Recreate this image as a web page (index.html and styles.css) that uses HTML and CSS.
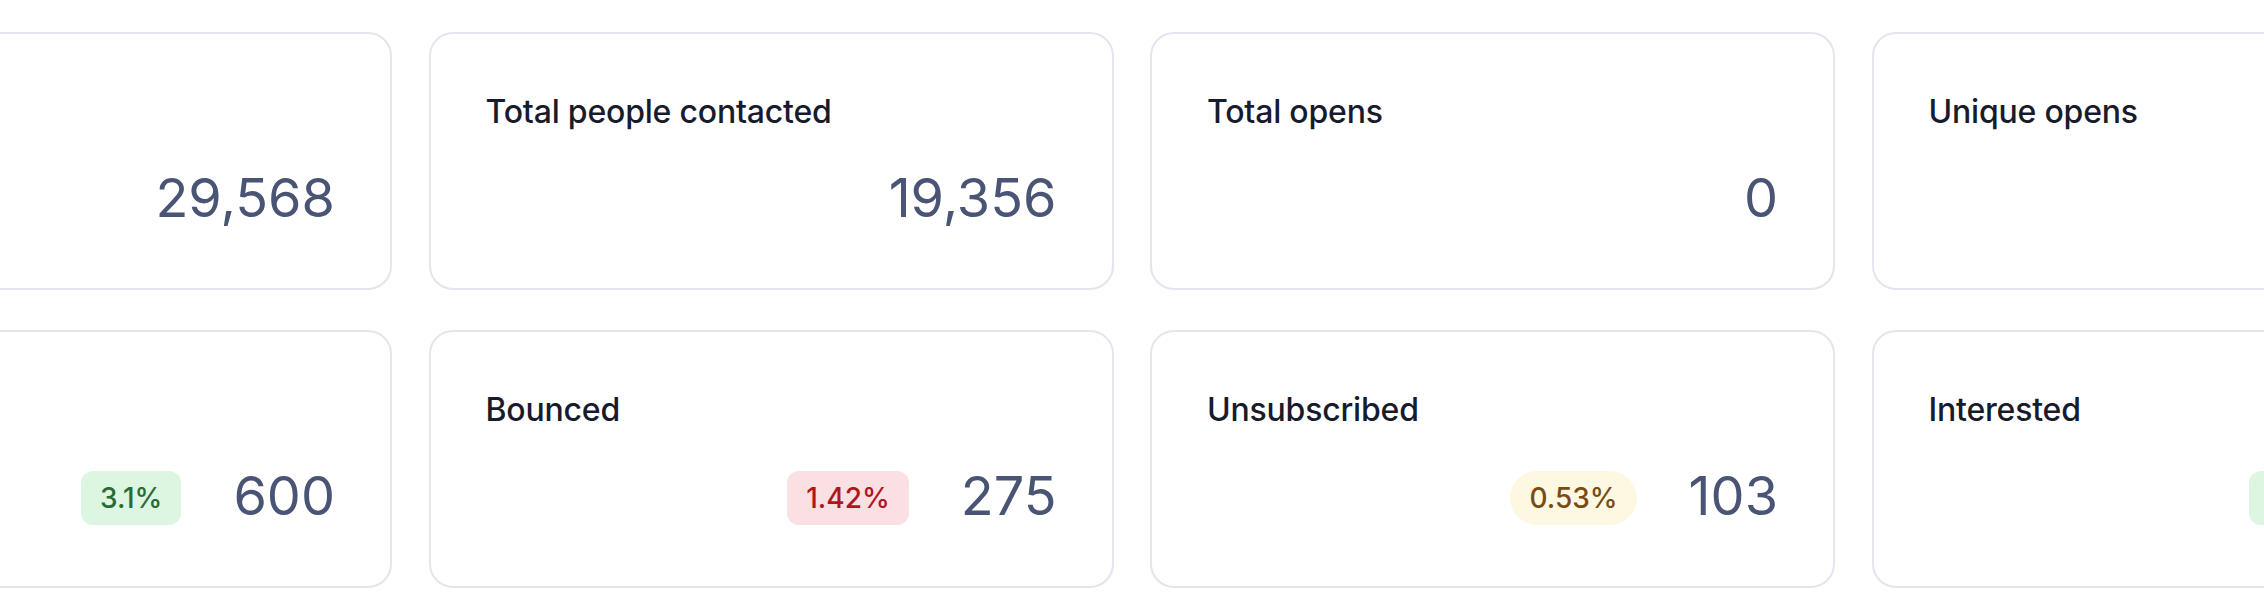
FILE: index.html
```html
<!DOCTYPE html>
<html lang="en">
<head>
<meta charset="utf-8">
<title>Campaign stats</title>
<link rel="stylesheet" href="styles.css">
</head>
<body>
<div class="stats">
  <div class="card">
    <div class="label">Emails sent</div>
    <div class="value-row"><span class="value">29,568</span></div>
  </div>
  <div class="card">
    <div class="label">Total people contacted</div>
    <div class="value-row"><span class="value">19,356</span></div>
  </div>
  <div class="card">
    <div class="label">Total opens</div>
    <div class="value-row"><span class="value">0</span></div>
  </div>
  <div class="card">
    <div class="label">Unique opens</div>
    <div class="value-row"><span class="value">0</span></div>
  </div>
  <div class="card">
    <div class="label">Replied</div>
    <div class="value-row"><span class="badge badge-green">3.1%</span><span class="value">600</span></div>
  </div>
  <div class="card">
    <div class="label">Bounced</div>
    <div class="value-row"><span class="badge badge-red">1.42%</span><span class="value">275</span></div>
  </div>
  <div class="card">
    <div class="label">Unsubscribed</div>
    <div class="value-row"><span class="badge badge-yellow">0.53%</span><span class="value">103</span></div>
  </div>
  <div class="card">
    <div class="label">Interested</div>
    <div class="value-row"><span class="badge badge-green">3.2%</span><span class="value">614</span></div>
  </div>
</div>
</body>
</html>
```
FILE: styles.css
```css
html, body {
  margin: 0;
  padding: 0;
  background: #ffffff;
  overflow: hidden;
}

body {
  font-family: Inter, "Noto Sans", "Liberation Sans", sans-serif;
}

.stats {
  display: grid;
  grid-template-columns: repeat(4, 685px);
  grid-auto-rows: 258px;
  column-gap: 36.5px;
  row-gap: 40px;
  margin-left: -293px;
  padding-top: 32px;
}

.card {
  box-sizing: border-box;
  border: 2px solid #e3e5ef;
  border-radius: 24px;
  background: #ffffff;
  padding: 54px 55px 0 55px;
  display: flex;
  flex-direction: column;
}

.label {
  font-size: 32px;
  line-height: 48px;
  font-weight: 500;
  color: #181b2c;
  letter-spacing: -0.2px;
  white-space: nowrap;
}

.value-row {
  margin-top: 30px;
  display: flex;
  justify-content: flex-end;
  align-items: center;
  gap: 52px;
}

.value {
  font-size: 54px;
  line-height: 64px;
  font-weight: 400;
  color: #4a5575;
}

.badge {
  font-size: 28px;
  line-height: 38px;
  font-weight: 500;
  padding: 8px 19px;
  border-radius: 12px;
  margin-top: 4px;
}

.badge-green {
  background: #ddf6e1;
  color: #2c6a35;
}

.badge-red {
  background: #fbe0e3;
  color: #b1151f;
}

.badge-yellow {
  background: #fdf8e2;
  color: #7b4b12;
  border-radius: 27px;
}
```
